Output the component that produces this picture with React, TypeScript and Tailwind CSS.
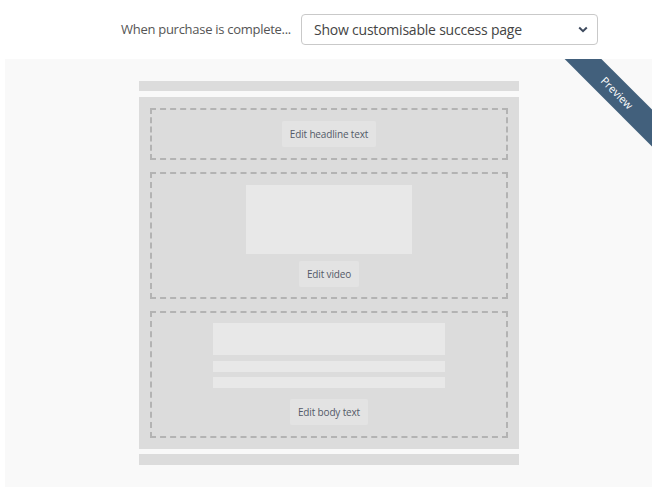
import { ReactNode } from 'react'

function EditButton({ label }: { label: string }) {
  return (
    <button className="h-[26px] px-[8px] rounded-[2px] bg-[#e3e3e3] text-[10px] tracking-[-0.15px] text-[#535a68] leading-none">
      {label}
    </button>
  )
}

function Block({ children, className = '' }: { children: ReactNode; className?: string }) {
  return (
    <div className={`border-2 border-dashed border-[#b3b3b3] flex flex-col items-center ${className}`}>
      {children}
    </div>
  )
}

export default function App() {
  return (
    <div className="w-[657px] h-[487px] bg-white font-['Open_Sans',sans-serif] overflow-hidden">
      <div className="h-[59px] flex items-center justify-end pr-[59px] gap-[10px]">
        <label className="text-[13px] tracking-[-0.28px] text-[#555]">When purchase is complete...</label>
        <div className="w-[297px] h-[31px] border border-[#c9c9c9] rounded-[4px] flex items-center justify-between pl-[12px] pr-[8px]">
          <span className="text-[14px] tracking-[-0.22px] text-[#444]">Show customisable success page</span>
          <svg width="10" height="7" viewBox="0 0 10 7" className="mr-[1px]">
            <path d="M1.2 1.5 L5 5.2 L8.8 1.5" fill="none" stroke="#3e4a5e" strokeWidth="2" />
          </svg>
        </div>
      </div>

      <div className="relative ml-[5px] w-[647px] h-[428px] bg-[#f9f9f9] overflow-hidden">
        <div className="absolute right-[-45px] top-[21px] w-[160px] h-[26px] rotate-45 bg-[#42607c] flex items-center justify-center">
          <span className="text-[11px] text-white">Preview</span>
        </div>

        <div className="ml-[134px] w-[380px] pt-[22px]">
          <div className="h-[10px] bg-[#dcdcdc]" />
          <div className="mt-[6px] bg-[#dcdcdc] px-[11px] py-[11px] flex flex-col gap-[12px]">
            <Block className="h-[52px] justify-center">
              <EditButton label="Edit headline text" />
            </Block>
            <Block className="h-[127px] pt-[11px]">
              <div className="w-[166px] h-[69px] bg-[#e8e8e8]" />
              <div className="mt-[6px]">
                <EditButton label="Edit video" />
              </div>
            </Block>
            <Block className="h-[127px] pt-[10px]">
              <div className="w-[232px] h-[32px] bg-[#e8e8e8]" />
              <div className="mt-[6px] w-[232px] h-[11px] bg-[#e8e8e8]" />
              <div className="mt-[5px] w-[232px] h-[11px] bg-[#e8e8e8]" />
              <div className="mt-[10px]">
                <EditButton label="Edit body text" />
              </div>
            </Block>
          </div>
          <div className="mt-[5px] h-[11px] bg-[#dcdcdc]" />
        </div>
      </div>
    </div>
  )
}
